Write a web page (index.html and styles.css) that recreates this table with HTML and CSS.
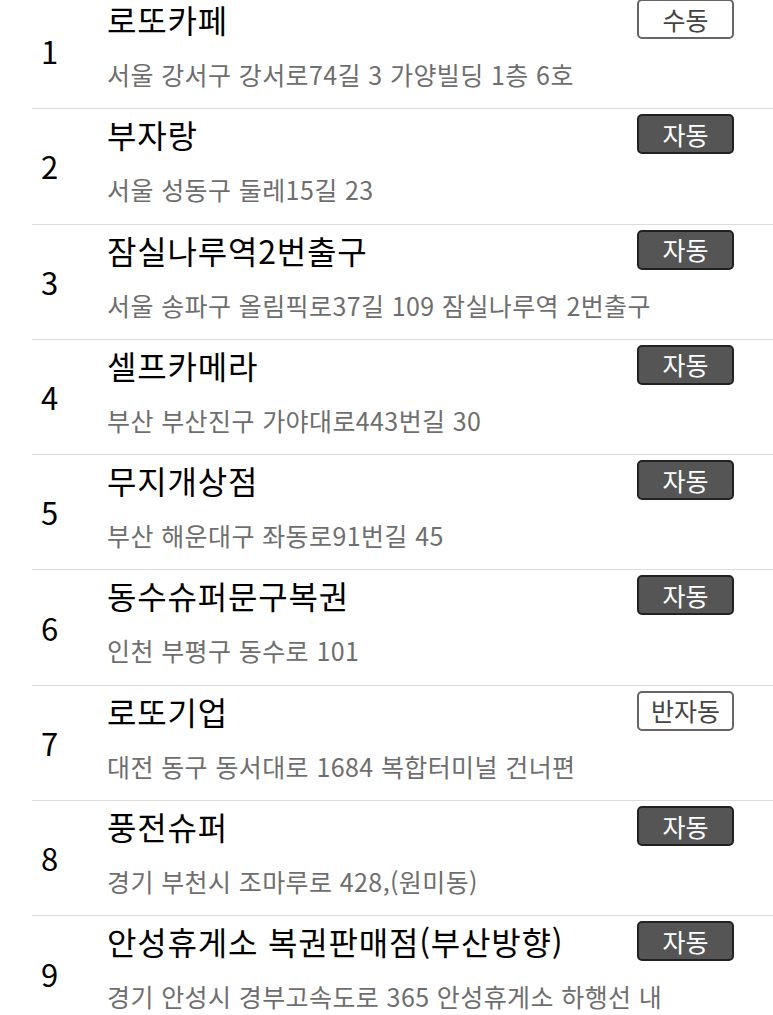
FILE: index.html
```html
<!DOCTYPE html>
<html lang="ko">
<head>
<meta charset="utf-8">
<link rel="stylesheet" href="styles.css">
</head>
<body>
<div class="list">
  <div class="row">
    <div class="num">1</div>
    <div class="info"><div class="name">로또카페</div><div class="addr">서울 강서구 강서로74길 3 가양빌딩 1층 6호</div></div>
    <div class="badge outline">수동</div>
  </div>
  <div class="row">
    <div class="num">2</div>
    <div class="info"><div class="name">부자랑</div><div class="addr">서울 성동구 둘레15길 23</div></div>
    <div class="badge filled">자동</div>
  </div>
  <div class="row">
    <div class="num">3</div>
    <div class="info"><div class="name">잠실나루역2번출구</div><div class="addr">서울 송파구 올림픽로37길 109 잠실나루역 2번출구</div></div>
    <div class="badge filled">자동</div>
  </div>
  <div class="row">
    <div class="num">4</div>
    <div class="info"><div class="name">셀프카메라</div><div class="addr">부산 부산진구 가야대로443번길 30</div></div>
    <div class="badge filled">자동</div>
  </div>
  <div class="row">
    <div class="num">5</div>
    <div class="info"><div class="name">무지개상점</div><div class="addr">부산 해운대구 좌동로91번길 45</div></div>
    <div class="badge filled">자동</div>
  </div>
  <div class="row">
    <div class="num">6</div>
    <div class="info"><div class="name">동수슈퍼문구복권</div><div class="addr">인천 부평구 동수로 101</div></div>
    <div class="badge filled">자동</div>
  </div>
  <div class="row">
    <div class="num">7</div>
    <div class="info"><div class="name">로또기업</div><div class="addr">대전 동구 동서대로 1684 복합터미널 건너편</div></div>
    <div class="badge outline">반자동</div>
  </div>
  <div class="row">
    <div class="num">8</div>
    <div class="info"><div class="name">풍전슈퍼</div><div class="addr">경기 부천시 조마루로 428,(원미동)</div></div>
    <div class="badge filled">자동</div>
  </div>
  <div class="row">
    <div class="num">9</div>
    <div class="info"><div class="name">안성휴게소 복권판매점(부산방향)</div><div class="addr">경기 안성시 경부고속도로 365 안성휴게소 하행선 내</div></div>
    <div class="badge filled">자동</div>
  </div>
</div>
</body>
</html>
```
FILE: styles.css
```css
html, body {
  margin: 0;
  padding: 0;
  background: #fff;
  overflow: hidden;
}
body {
  font-family: "Noto Sans CJK KR", "Noto Sans", sans-serif;
  color: #000;
}
.list {
  margin-top: -6px;
}
.row {
  margin-left: 32px;
  height: 115.3px;
  box-sizing: border-box;
  border-bottom: 1px solid #dcdcdc;
  display: flex;
  align-items: center;
}
.num {
  width: 75px;
  padding-left: 9px;
  box-sizing: border-box;
  font-size: 31px;
  line-height: 36px;
  align-self: center;
  font-weight: 400;
}
.info {
  flex: 1;
  align-self: flex-start;
  padding-top: 7px;
  display: flex;
  flex-direction: column;
  min-width: 0;
}
.name {
  font-size: 32px;
  line-height: 36px;
  letter-spacing: 0.8px;
  white-space: nowrap;
}
.addr {
  margin-top: 22px;
  font-size: 25px;
  line-height: 30px;
  letter-spacing: 0.4px;
  color: #6e6e6e;
  white-space: nowrap;
}
.badge {
  align-self: flex-start;
  margin-top: 5px;
  margin-right: 39px;
  width: 97px;
  height: 40px;
  box-sizing: border-box;
  border-radius: 5px;
  display: flex;
  align-items: center;
  justify-content: center;
  font-size: 25px;
  line-height: 1;
}
.badge.filled {
  background: #555;
  border: 2px solid #222;
  color: #fff;
}
.badge.outline {
  background: #fff;
  border: 2px solid #666;
  color: #444;
}
```
